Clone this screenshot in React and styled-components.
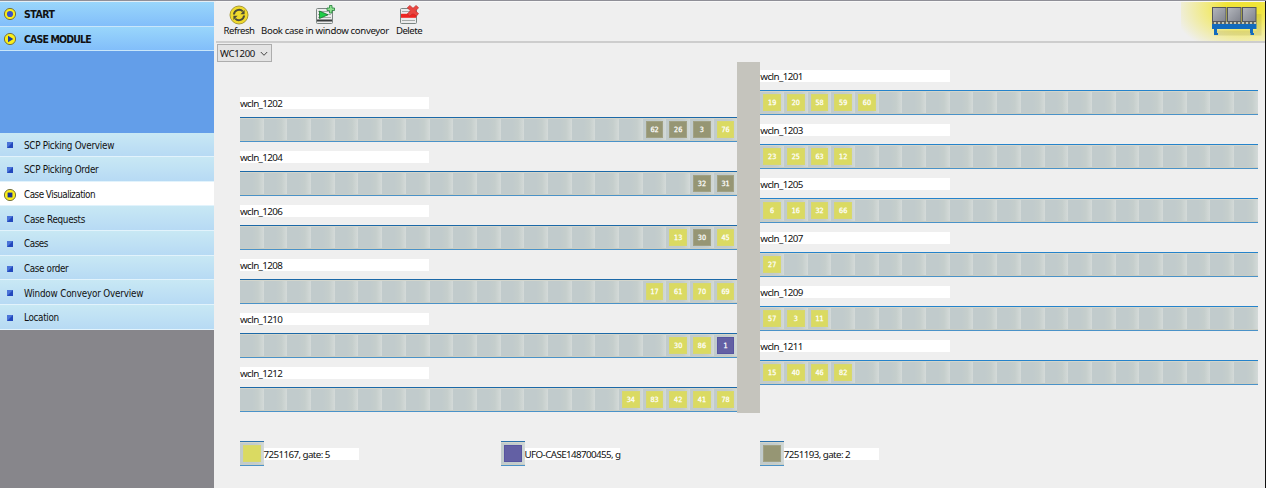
import React from "react";
import styled, { createGlobalStyle } from "styled-components";

const Global = createGlobalStyle`
  * { box-sizing: border-box; }
  body { margin: 0; background: #efefef; overflow: hidden; }
`;

const Window = styled.div`
  width: 1266px;
  height: 488px;
  display: flex;
  background: #efefef;
  border-top: 1px solid #8f8f97;
  color: #111;
  font-family: "Noto Sans", "Open Sans", sans-serif;
  font-size: 9px;
`;

const Sidebar = styled.nav`
  width: 214px;
  flex: none;
  display: flex;
  flex-direction: column;
  background: #87868b;
  border-top: 1px solid #e4eef5;
  font-family: "DejaVu Sans Condensed", "DejaVu Sans", sans-serif;
  font-stretch: condensed;
`;

const Heading = styled.div`
  height: 24.5px;
  display: flex;
  align-items: center;
  gap: 7px;
  padding: 1px 0 0 3px;
  border-bottom: 1.5px solid #c9e6fa;
  background: linear-gradient(#99d6fb, #82befa);
  font-size: 10.5px;
  font-weight: bold;
  letter-spacing: ${(p) => p.$spacing}px;
`;

const Blank = styled.div`
  height: 81.5px;
  background: #639ee9;
`;

const Item = styled.div`
  height: 24.65px;
  display: flex;
  align-items: center;
  gap: 7px;
  padding: 2px 0 0 3px;
  border-bottom: 1px solid #e2f3fc;
  background: ${(p) => (p.$active ? "#fff" : "linear-gradient(#c8e8f4, #b7daf4)")};
  font-size: 9.8px;
  letter-spacing: ${(p) => p.$spacing}px;
`;

const Glyph = styled.svg`
  width: 14px;
  height: 14px;
  flex: none;
  display: block;
`;

const Main = styled.main`
  flex: 1;
  min-width: 0;
  padding-left: 2px;
  border-right: 1px solid #111;
`;

const Toolbar = styled.header`
  height: 42px;
  display: flex;
  align-items: flex-start;
  border-top: 1px solid #f8f8f8;
  border-bottom: 2px solid #cdcdcd;
  padding-left: 8px;
`;

const Tool = styled.div`
  width: ${(p) => p.$width}px;
  margin-right: 8px;
  display: flex;
  flex-direction: column;
  align-items: center;
  padding-top: 3px;
  white-space: nowrap;
  font-size: 9.6px;
  line-height: 12px;
  letter-spacing: ${(p) => p.$spacing}px;
  svg { width: 20px; height: 20px; }
`;

const Brand = styled.div`
  width: 84px;
  height: 39px;
  margin-left: auto;
  background: radial-gradient(ellipse 70px 46px at 62px 6px, #f0e438 25%, #f1ea7c 50%, #efefef00 100%);
  svg { display: block; margin-left: 11px; }
`;

const Select = styled.div`
  width: 55px;
  height: 18px;
  margin: 1px 0 0 1px;
  display: flex;
  align-items: center;
  justify-content: space-between;
  padding: 1px 3px 0 2px;
  border: 1px solid #adadad;
  background: #e4e4e4;
  font-size: 9.6px;
  letter-spacing: -0.3px;
`;

const Conveyor = styled.section`
  display: flex;
  align-items: flex-start;
  padding-left: 24px;
`;

const Bank = styled.div`
  width: 497.3px;
  padding-top: ${(p) => p.$top}px;
`;

const Lane = styled.div`
  height: 54px;
`;

const Label = styled.div`
  width: ${(p) => p.$width}px;
  height: 12px;
  background: #fff;
  line-height: 13px;
  font-size: 9.8px;
  white-space: nowrap;
  letter-spacing: ${(p) => p.$spacing}px;
`;

const Track = styled.div`
  height: 25px;
  margin-top: 8px;
  display: flex;
  border-top: 1px solid ${(p) => (p.$dark ? "#1c69a8" : "#2583cb")};
  border-bottom: 1px solid #4a92c8;
`;

const Slot = styled.div`
  flex: 1;
  display: flex;
  align-items: center;
  justify-content: center;
  background: linear-gradient(90deg, #c1cbcc 0 50%, #c5cecc 75%, #d0d7d5 94%, #d4dad9);
  box-shadow: inset 0 1px #d3d5cb, inset 0 -1px #cacdc3;
`;

const tones = { y: "#dada62", o: "#969674", b: "#6360a4" };
const edges = { y: "#d8d86e", o: "#a1a184", b: "#5754a0" };

const Case = styled.div`
  width: 17.5px;
  height: 17.5px;
  background: ${(p) => tones[p.$tone]};
  border: 1px solid ${(p) => edges[p.$tone]};
  color: #fff;
  font-family: "DejaVu Sans Condensed", "DejaVu Sans", sans-serif;
  font-stretch: condensed;
  font-size: 7.2px;
  -webkit-text-stroke: 0.25px #fff;
  line-height: 16px;
  text-align: center;
`;

const Tower = styled.div`
  width: 23px;
  height: 351px;
  background: #c5c4bd;
`;

const Legend = styled.footer`
  display: flex;
  margin-top: 20px;
  padding-left: 24px;
`;

const Entry = styled.div`
  width: ${(p) => p.$width}px;
  display: flex;
  align-items: center;
`;

const Swatch = styled.div`
  width: 23.5px;
  height: 25px;
  display: flex;
  border-top: 1px solid #2c72ad;
  border-bottom: 1px solid #4a92c8;
`;

function MenuIcon({ kind }) {
  return (
    <Glyph viewBox="0 0 14 14">
      {kind !== "item" && <circle cx="7" cy="7" r="5.6" fill="#fbef18" stroke="#77743e" strokeWidth="1" />}
      {kind === "start" && <circle cx="7" cy="7" r="3.1" fill="#3d52c6" />}
      {kind === "module" && <path d="M5 3.8 10.3 7 5 10.2Z" fill="#20409c" />}
      {kind === "active" && <rect x="4.6" y="4.6" width="4.8" height="4.8" fill="#1c3494" />}
      {kind === "item" && (
        <>
          <rect x="4" y="4" width="6" height="6" fill="#2348bd" />
          <path d="M4 4H10L4 10Z" fill="#4b74d8" />
        </>
      )}
    </Glyph>
  );
}

function RefreshIcon() {
  return (
    <svg viewBox="0 0 20 20">
      <circle cx="10" cy="10" r="9" fill="#f0da2c" stroke="#a89a38" />
      <path d="M4.9 9.5A5.2 5.2 0 0 1 13.8 6.4M15.1 10.5A5.2 5.2 0 0 1 6.2 13.6" fill="none" stroke="#4b4b38" strokeWidth="2" />
      <path d="M15.6 5V9.2H11.4ZM4.4 15V10.8H8.6Z" fill="#4b4b38" />
    </svg>
  );
}

function ListBase() {
  return (
    <>
      <rect x="1.5" y="3.5" width="16" height="15" rx="1" fill="#ececec" stroke="#7b8582" />
      <path d="M3 6.5H16M3 9.5H16M3 12.5H16" stroke="#a6aaa8" />
      <path d="M2 15.5H17" stroke="#3a3e3e" strokeWidth="2" />
    </>
  );
}

function BookIcon() {
  return (
    <svg viewBox="0 0 20 20">
      <ListBase />
      <path d="M4.5 6 13 9.8 4.5 13.5Z" fill="#1fce48" stroke="#15702b" strokeWidth=".8" />
      <path d="M14.5 .5H17V3H19.5V5.5H17V8H14.5V5.5H12V3H14.5Z" fill="#8ee08e" stroke="#22803a" strokeWidth=".8" />
    </svg>
  );
}

function DeleteIcon() {
  return (
    <svg viewBox="0 0 20 20">
      <rect x="1.5" y="3.5" width="16" height="15" rx="1" fill="#ececec" stroke="#7b8582" />
      <path d="M3 6.5H16M3 15.5H16" stroke="#a6aaa8" />
      <rect x="2" y="8.8" width="15" height="4" fill="#ee2622" />
      <path d="M8.3 2.8 10.8 .4 14 3.2 17.2 .4 19.6 2.8 16.6 5.8 19.6 8.8 17.2 11.2 14 8.4 10.8 11.2 8.3 8.8 11.4 5.8Z" fill="#e94640" stroke="#b82624" strokeWidth=".6" />
    </svg>
  );
}

function ConveyorLogo() {
  return (
    <svg width="72" height="39" viewBox="0 0 72 39">
      <defs>
        <linearGradient id="crate" x2="1" y2="1">
          <stop stopColor="#b4b7bd" />
          <stop offset="1" stopColor="#7f828c" />
        </linearGradient>
      </defs>
      <path d="M22 31H67V12" fill="none" stroke="#8a8640" strokeOpacity=".18" strokeWidth="5" />
      {[20.5, 35.5, 50.5].map((x) => (
        <rect key={x} x={x} y="5.5" width="13.5" height="14" fill="url(#crate)" stroke="#53565d" />
      ))}
      <rect x="20" y="20" width="44.5" height="2" fill="#666962" />
      <path d="M22 21H64" stroke="#c4c5b1" strokeWidth="2" strokeDasharray="2 2" />
      <path d="M20 22H64.5V27H61V31H62V33H58.5V31H58V27H25V31H26V33H22V27H20Z" fill="#126bbd" />
    </svg>
  );
}

const SLOTS = 21;
const leftLanes = [
  ["wcln_1202", "62o 26o 3o 76y"],
  ["wcln_1204", "32o 31o"],
  ["wcln_1206", "13y 30o 45y"],
  ["wcln_1208", "17y 61y 70y 69y"],
  ["wcln_1210", "30y 86y 1b"],
  ["wcln_1212", "34y 83y 42y 41y 78y"],
];
const rightLanes = [
  ["wcln_1201", "19y 20y 58y 59y 60y"],
  ["wcln_1203", "23y 25y 63y 12y"],
  ["wcln_1205", "6y 16y 32y 66y"],
  ["wcln_1207", "27y"],
  ["wcln_1209", "57y 3y 11y"],
  ["wcln_1211", "15y 40y 46y 82y"],
];
const menu = [
  ["SCP Picking Overview", -0.26],
  ["SCP Picking Order", -0.26],
  ["Case Visualization", -0.5],
  ["Case Requests", -0.28],
  ["Cases", -0.45],
  ["Case order", -0.35],
  ["Window Conveyor Overview", -0.19],
  ["Location", -0.3],
];
const legend = [
  ["y", "7251167, gate: 5", 261],
  ["b", "UFO-CASE148700455, g", 259.3],
  ["o", "7251193, gate: 2", 260],
];

function ConveyorLane({ name, cases, alignEnd }) {
  const list = cases.split(" ");
  const empty = Array(SLOTS - list.length).fill(null);
  const slots = alignEnd ? [...empty, ...list] : [...list, ...empty];
  return (
    <Lane>
      <Label $width={189.4} $spacing={-0.6}>{name}</Label>
      <Track $dark={alignEnd}>
        {slots.map((s, i) => (
          <Slot key={i}>{s && <Case $tone={s.slice(-1)}>{s.slice(0, -1)}</Case>}</Slot>
        ))}
      </Track>
    </Lane>
  );
}

export default function App() {
  return (
    <Window>
      <Global />
      <Sidebar>
        <Heading $spacing={-0.5}><MenuIcon kind="start" />START</Heading>
        <Heading $spacing={-0.85}><MenuIcon kind="module" />CASE MODULE</Heading>
        <Blank />
        {menu.map(([name, spacing], i) => (
          <Item key={name} $active={i === 2} $spacing={spacing}>
            <MenuIcon kind={i === 2 ? "active" : "item"} />
            {name}
          </Item>
        ))}
      </Sidebar>
      <Main>
        <Toolbar>
          <Tool $width={30} $spacing={-0.5}><RefreshIcon />Refresh</Tool>
          <Tool $width={126} $spacing={-0.34}><BookIcon />Book case in window conveyor</Tool>
          <Tool $width={26} $spacing={-0.5}><DeleteIcon />Delete</Tool>
          <Brand><ConveyorLogo /></Brand>
        </Toolbar>
        <Select>
          WC1200
          <svg width="8" height="6" viewBox="0 0 8 6"><path d="M.8 1 4 4.3 7.2 1" fill="none" stroke="#444" /></svg>
        </Select>
        <Conveyor>
          <Bank $top={35}>
            {leftLanes.map(([n, c]) => <ConveyorLane key={n} name={n} cases={c} alignEnd />)}
          </Bank>
          <Tower />
          <Bank $top={8}>
            {rightLanes.map(([n, c]) => <ConveyorLane key={n} name={n} cases={c} />)}
          </Bank>
        </Conveyor>
        <Legend>
          {legend.map(([tone, text, width]) => (
            <Entry key={text} $width={width}>
              <Swatch><Slot><Case $tone={tone} /></Slot></Swatch>
              <Label $width={95} $spacing={-0.6}>{text}</Label>
            </Entry>
          ))}
        </Legend>
      </Main>
    </Window>
  );
}
